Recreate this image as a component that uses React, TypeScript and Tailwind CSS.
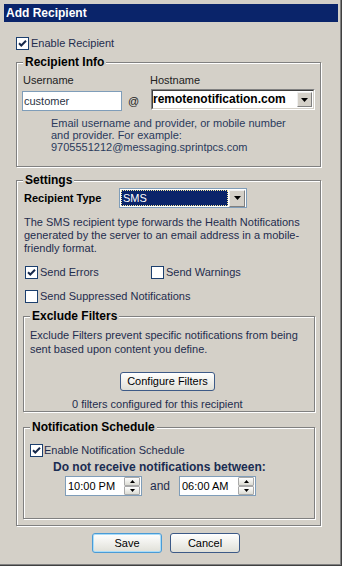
import type { ReactNode } from "react";

function Check({ checked }: { checked?: boolean }) {
  return (
    <span className="flex h-[13px] w-[13px] shrink-0 items-center justify-center border border-[#1c3f6e] bg-white">
      {checked && (
        <svg width="11" height="11" viewBox="0 0 11 11">
          <path d="M2 5.2l2.3 2.3L9 2.8" fill="none" stroke="#16284a" strokeWidth="2" />
        </svg>
      )}
    </span>
  );
}

function Group({ title, className, children }: { title: string; className?: string; children: ReactNode }) {
  return (
    <div className={`border border-[#808080] shadow-[inset_1px_1px_0_#fff,1px_1px_0_#fff] ${className ?? ""}`}>
      <div className="-mt-[8px] w-fit bg-[#d4d0c8] px-[2px] text-[12px] font-bold leading-[14px] text-black">
        {title}
      </div>
      {children}
    </div>
  );
}

function Arrow({ w = 7, h = 4, up }: { w?: number; h?: number; up?: boolean }) {
  return (
    <svg width={w} height={h} viewBox={`0 0 ${w} ${h}`}>
      <path d={up ? `M0 ${h}H${w}L${w / 2} 0z` : `M0 0H${w}L${w / 2} ${h}z`} fill="#000" />
    </svg>
  );
}

function Spinner({ value }: { value: string }) {
  return (
    <div className="flex h-[20px] w-[77px] items-center border border-[#7f9db9] bg-white pl-[1px] pr-[1px]">
      <span className="flex-1 pl-[1px] text-[11px] text-black">{value}</span>
      <div className="flex h-full w-[16px] flex-col">
        <span className="flex h-[9px] items-center justify-center rounded-[1px] border border-[#a9a9a9] bg-gradient-to-b from-white to-[#dcdcd4]">
          <Arrow w={5} h={3} up />
        </span>
        <span className="flex h-[9px] items-center justify-center rounded-[1px] border border-[#a9a9a9] bg-gradient-to-b from-white to-[#dcdcd4]">
          <Arrow w={5} h={3} />
        </span>
      </div>
    </div>
  );
}

export default function App() {
  return (
    <div className="h-[566px] w-[342px] border-b border-r border-[#404040] bg-[#d4d0c8] font-['Liberation_Sans',Arial,sans-serif] text-[11px] leading-[13px] text-[#1f2d4e]">
      <div className="h-full border-b border-r border-[#808080] pl-[4px] pr-[2px] pt-[4px]">
        <div className="h-[18px] bg-[#0a246a] pl-[2px] text-[12px] font-bold leading-[18px] text-white">
          Add Recipient
        </div>

        <label className="ml-[12px] mt-[15px] flex items-center gap-[2px]">
          <Check checked />
          <span>Enable Recipient</span>
        </label>

        <Group title="Recipient Info" className="ml-[12px] mt-[12px] w-[305px] pb-[13px] pl-[6px]">
          <div className="mt-[5px] flex leading-[12px] text-[#222]">
            <span className="w-[127px]">Username</span>
            <span>Hostname</span>
          </div>
          <div className="mt-[3px] flex items-start">
            <div className="-ml-px mt-[2px] h-[20px] w-[100px] border border-[#7f9db9] bg-white pl-[1px] leading-[18px] text-[#2b3344]">
              customer
            </div>
            <span className="ml-[6px] mt-[6px] w-[14px] text-[#222]">@</span>
            <div className="ml-[9px] h-[21px] w-[164px] border border-b-white border-l-[#808080] border-r-white border-t-[#808080]">
              <div className="flex h-full items-center border border-b-[#d4d0c8] border-l-[#404040] border-r-[#d4d0c8] border-t-[#404040] bg-white">
                <span className="flex-1 text-[12px] font-bold text-black">remotenotification.com</span>
                <span className="mr-[1px] flex h-[15px] w-[15px] items-center justify-center border border-b-[#808080] border-l-[#f0f0f0] border-r-[#808080] border-t-[#f0f0f0] bg-[#d4d0c8]">
                  <Arrow />
                </span>
              </div>
            </div>
          </div>
          <p className="ml-[28px] mt-[6px] whitespace-nowrap leading-[12px] text-[#2a3a5c]">
            Email username and provider, or mobile number
            <br />
            and provider. For example:
            <br />
            9705551212@messaging.sprintpcs.com
          </p>
        </Group>

        <Group title="Settings" className="ml-[12px] mt-[13px] w-[305px] pb-[6px] pl-[6px]">
          <div className="mt-[1px] flex items-center">
            <span className="w-[96px] pl-px font-bold text-black">Recipient Type</span>
            <div className="flex h-[20px] w-[128px] items-center border border-[#7f9db9] bg-white p-[1px]">
              <span className="h-full flex-1 border border-dotted border-[#f3e9a0] bg-[#0a246a] pl-px leading-[14px] text-white">
                SMS
              </span>
              <span className="ml-px flex h-[17px] w-[16px] items-center justify-center border border-b-[#808080] border-l-[#f0f0f0] border-r-[#808080] border-t-[#f0f0f0] bg-[#d4d0c8]">
                <Arrow />
              </span>
            </div>
          </div>
          <p className="ml-px mt-[8px] whitespace-nowrap">
            The SMS recipient type forwards the Health Notifications
            <br />
            generated by the server to an email address in a mobile-
            <br />
            friendly format.
          </p>
          <div className="ml-[2px] mt-[11px] flex">
            <label className="flex w-[126px] items-center gap-[2px]">
              <Check checked />
              <span>Send Errors</span>
            </label>
            <label className="flex items-center gap-[2px]">
              <Check />
              <span>Send Warnings</span>
            </label>
          </div>
          <label className="ml-[2px] mt-[11px] flex items-center gap-[2px]">
            <Check />
            <span>Send Suppressed Notifications</span>
          </label>

          <Group title="Exclude Filters" className="mt-[13px] w-[292px] pb-[1px] pl-[6px]">
            <p className="mt-[5px] whitespace-nowrap leading-[14px]">
              Exclude Filters prevent specific notifications from being
              <br />
              sent based upon content you define.
            </p>
            <button className="ml-[90px] mt-[16px] block h-[19px] w-[95px] rounded-[3px] border border-[#3d5a87] bg-gradient-to-b from-white to-[#e0e0d8] text-[11px] leading-[17px] text-black">
              Configure Filters
            </button>
            <p className="ml-[42px] mt-[7px] leading-[12px]">0 filters configured for this recipient</p>
          </Group>

          <Group title="Notification Schedule" className="mt-[15px] w-[292px] pb-[22px] pl-[6px]">
            <label className="mt-[10px] flex items-center gap-[1px]">
              <Check checked />
              <span>Enable Notification Schedule</span>
            </label>
            <p className="ml-[23px] mt-[3px] text-[12px] font-bold leading-[14px] text-[#1a2c52]">
              Do not receive notifications between:
            </p>
            <div className="ml-[35px] mt-[2px] flex items-center">
              <Spinner value="10:00 PM" />
              <span className="ml-[8px] w-[29px] text-[12px]">and</span>
              <Spinner value="06:00 AM" />
            </div>
          </Group>
        </Group>

        <div className="ml-[88px] mt-[7px] flex gap-[8px]">
          <button className="h-[20px] w-[70px] rounded-[3px] border border-[#4a9bd6] bg-gradient-to-b from-white to-[#e0e0d8] text-[11px] text-black shadow-[inset_0_0_0_1px_#a9dcf8]">
            Save
          </button>
          <button className="h-[20px] w-[70px] rounded-[3px] border border-[#3d5a87] bg-gradient-to-b from-white to-[#e0e0d8] text-[11px] text-black">
            Cancel
          </button>
        </div>
      </div>
    </div>
  );
}
